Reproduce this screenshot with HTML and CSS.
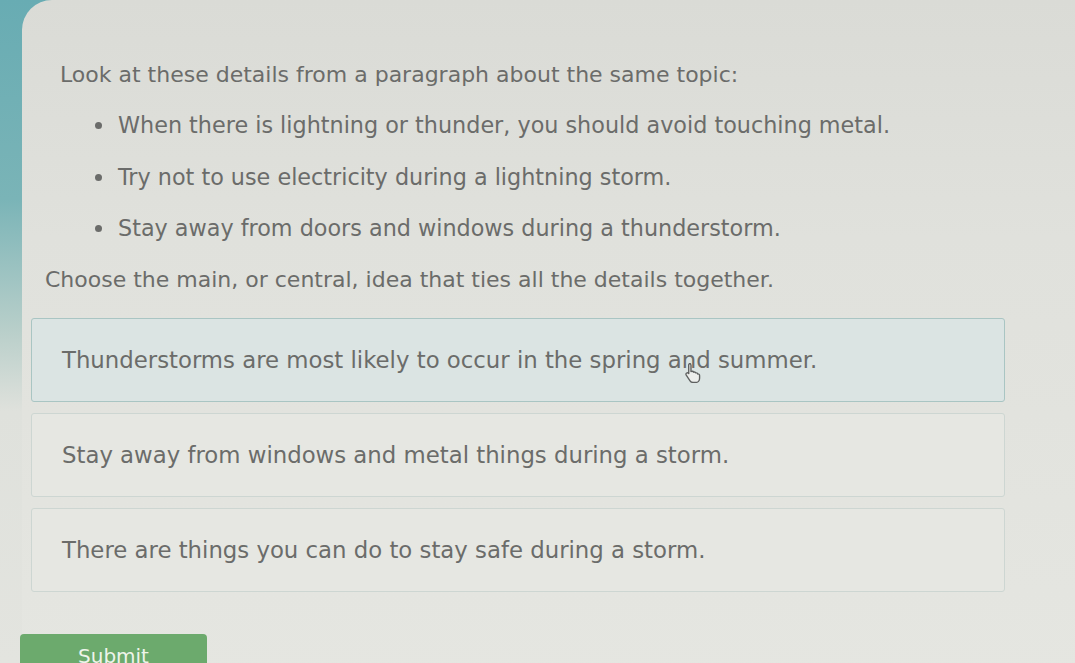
FILE: index.html
```html
<!DOCTYPE html>
<html lang="en">
<head>
<meta charset="utf-8">
<title>Main idea</title>
<link rel="stylesheet" href="styles.css">
</head>
<body>
<div class="card">
  <p class="intro">Look at these details from a paragraph about the same topic:</p>
  <ul class="details">
    <li>When there is lightning or thunder, you should avoid touching metal.</li>
    <li>Try not to use electricity during a lightning storm.</li>
    <li>Stay away from doors and windows during a thunderstorm.</li>
  </ul>
  <p class="prompt">Choose the main, or central, idea that ties all the details together.</p>
  <div class="options">
    <div class="option hover">Thunderstorms are most likely to occur in the spring and summer.
      <svg class="cursor" width="19" height="21" viewBox="0 0 18 20"><path d="M5 1.5c1 0 1.6.7 1.6 1.6v6l.6-.2c.9-.3 1.7.2 1.9.8.9-.4 1.8 0 2 .7.9-.3 1.8.2 1.9 1 .9-.2 1.8.4 1.8 1.4v2.6c0 2.2-1.6 4.1-3.8 4.1H8.6c-1.2 0-2.2-.6-2.9-1.6L2.1 12.6c-.5-.8-.3-1.7.4-2.1.7-.4 1.5-.2 2 .4l-.1-7.8c0-.9.6-1.6 1.6-1.6z" fill="#eceeec" stroke="#5e6060" stroke-width="1.3" stroke-linejoin="round"/></svg>
    </div>
    <div class="option">Stay away from windows and metal things during a storm.</div>
    <div class="option">There are things you can do to stay safe during a storm.</div>
  </div>
  <button class="submit">Submit</button>
</div>
</body>
</html>
```

FILE: styles.css
```css
html, body {
  margin: 0;
  height: 100%;
  overflow: hidden;
}
body {
  background: linear-gradient(180deg, #68acb3 0%, #7ab4b7 30%, #b9cfca 50%, #dfe1dc 62%, #e3e4df 100%);
  font-family: "DejaVu Sans", Verdana, sans-serif;
  color: #6b6c6a;
}
.card {
  margin-left: 22px;
  min-height: 100%;
  background: linear-gradient(180deg, #dadbd6 0%, #e0e1dc 35%, #e5e6e1 100%);
  border-top-left-radius: 30px;
  padding: 60px 70px 0 0;
  box-sizing: border-box;
}
.intro {
  margin: 0 0 0 38px;
  font-size: 22px;
  line-height: 30px;
}
.details {
  margin: 20px 0 0 0;
  padding: 0 0 0 94px;
  font-size: 22.3px;
  line-height: 30px;
}
.details li {
  margin-bottom: 21.5px;
  padding-left: 2px;
}
.prompt {
  margin: 3px 0 0 23px;
  font-size: 22px;
  line-height: 30px;
}
.options {
  margin: 23px 0 0 9px;
  display: flex;
  flex-direction: column;
  gap: 11px;
}
.option {
  position: relative;
  height: 84px;
  box-sizing: border-box;
  border: 1px solid #cdd6d2;
  border-radius: 3px;
  background: #e6e7e2;
  padding: 0 30px;
  display: flex;
  align-items: center;
  font-size: 22.8px;
}
.option.hover {
  background: #dbe4e3;
  border-color: #a9c5c3;
}
.cursor {
  position: absolute;
  left: 652px;
  top: 43px;
}
.submit {
  margin: 42px 0 0 -2px;
  width: 187px;
  height: 44px;
  border: none;
  border-radius: 4px;
  background: #6caa6d;
  color: #eef4ea;
  font-family: "DejaVu Sans", Verdana, sans-serif;
  font-size: 20px;
  line-height: 40px;
  padding: 0;
  vertical-align: top;
}
```
